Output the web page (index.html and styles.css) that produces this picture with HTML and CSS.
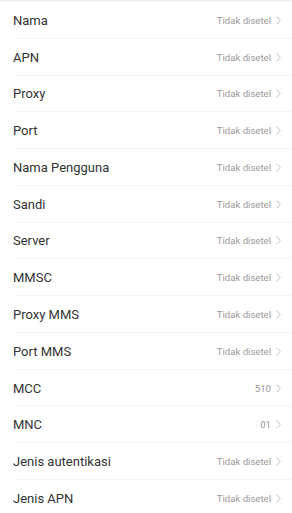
FILE: index.html
```html
<!DOCTYPE html>
<html lang="id">
<head>
<meta charset="utf-8">
<link rel="stylesheet" href="styles.css">
</head>
<body>
<div class="topbar"></div>
<ul class="list">
  <li class="row"><span class="label">Nama</span><span class="value">Tidak disetel</span><svg class="chev" viewBox="0 0 5 9"><polyline points="0.6,0.6 4.2,4.5 0.6,8.4"/></svg></li>
  <li class="row"><span class="label">APN</span><span class="value">Tidak disetel</span><svg class="chev" viewBox="0 0 5 9"><polyline points="0.6,0.6 4.2,4.5 0.6,8.4"/></svg></li>
  <li class="row"><span class="label">Proxy</span><span class="value">Tidak disetel</span><svg class="chev" viewBox="0 0 5 9"><polyline points="0.6,0.6 4.2,4.5 0.6,8.4"/></svg></li>
  <li class="row"><span class="label">Port</span><span class="value">Tidak disetel</span><svg class="chev" viewBox="0 0 5 9"><polyline points="0.6,0.6 4.2,4.5 0.6,8.4"/></svg></li>
  <li class="row"><span class="label">Nama Pengguna</span><span class="value">Tidak disetel</span><svg class="chev" viewBox="0 0 5 9"><polyline points="0.6,0.6 4.2,4.5 0.6,8.4"/></svg></li>
  <li class="row"><span class="label">Sandi</span><span class="value">Tidak disetel</span><svg class="chev" viewBox="0 0 5 9"><polyline points="0.6,0.6 4.2,4.5 0.6,8.4"/></svg></li>
  <li class="row"><span class="label">Server</span><span class="value">Tidak disetel</span><svg class="chev" viewBox="0 0 5 9"><polyline points="0.6,0.6 4.2,4.5 0.6,8.4"/></svg></li>
  <li class="row"><span class="label">MMSC</span><span class="value">Tidak disetel</span><svg class="chev" viewBox="0 0 5 9"><polyline points="0.6,0.6 4.2,4.5 0.6,8.4"/></svg></li>
  <li class="row"><span class="label">Proxy MMS</span><span class="value">Tidak disetel</span><svg class="chev" viewBox="0 0 5 9"><polyline points="0.6,0.6 4.2,4.5 0.6,8.4"/></svg></li>
  <li class="row"><span class="label">Port MMS</span><span class="value">Tidak disetel</span><svg class="chev" viewBox="0 0 5 9"><polyline points="0.6,0.6 4.2,4.5 0.6,8.4"/></svg></li>
  <li class="row"><span class="label">MCC</span><span class="value">510</span><svg class="chev" viewBox="0 0 5 9"><polyline points="0.6,0.6 4.2,4.5 0.6,8.4"/></svg></li>
  <li class="row"><span class="label">MNC</span><span class="value">01</span><svg class="chev" viewBox="0 0 5 9"><polyline points="0.6,0.6 4.2,4.5 0.6,8.4"/></svg></li>
  <li class="row"><span class="label">Jenis autentikasi</span><span class="value">Tidak disetel</span><svg class="chev" viewBox="0 0 5 9"><polyline points="0.6,0.6 4.2,4.5 0.6,8.4"/></svg></li>
  <li class="row"><span class="label">Jenis APN</span><span class="value">Tidak disetel</span><svg class="chev" viewBox="0 0 5 9"><polyline points="0.6,0.6 4.2,4.5 0.6,8.4"/></svg></li>
</ul>
</body>
</html>
```
FILE: styles.css
```css
html, body {
  margin: 0;
  padding: 0;
  background: #ffffff;
  font-family: Roboto, "Noto Sans", "Liberation Sans", sans-serif;
}
.topbar {
  height: 2px;
  background: linear-gradient(#ececec, #fafafa);
}
.list {
  list-style: none;
  margin: 0;
  padding: 0;
}
.row {
  display: flex;
  align-items: center;
  height: 36.77px;
  box-sizing: border-box;
  padding: 0 11px 0 13px;
  position: relative;
}
.row::after {
  content: "";
  position: absolute;
  left: 14px;
  right: 0;
  bottom: 0;
  height: 1px;
  background: #f4f4f4;
}
.label {
  flex: 1;
  font-size: 13px;
  color: #333333;
}
.value {
  font-size: 9.6px;
  color: #9a9a9a;
  margin-right: 5px;
}
.chev {
  width: 5px;
  height: 9px;
  fill: none;
  stroke: #b0b0b0;
  stroke-width: 0.8;
}
```
